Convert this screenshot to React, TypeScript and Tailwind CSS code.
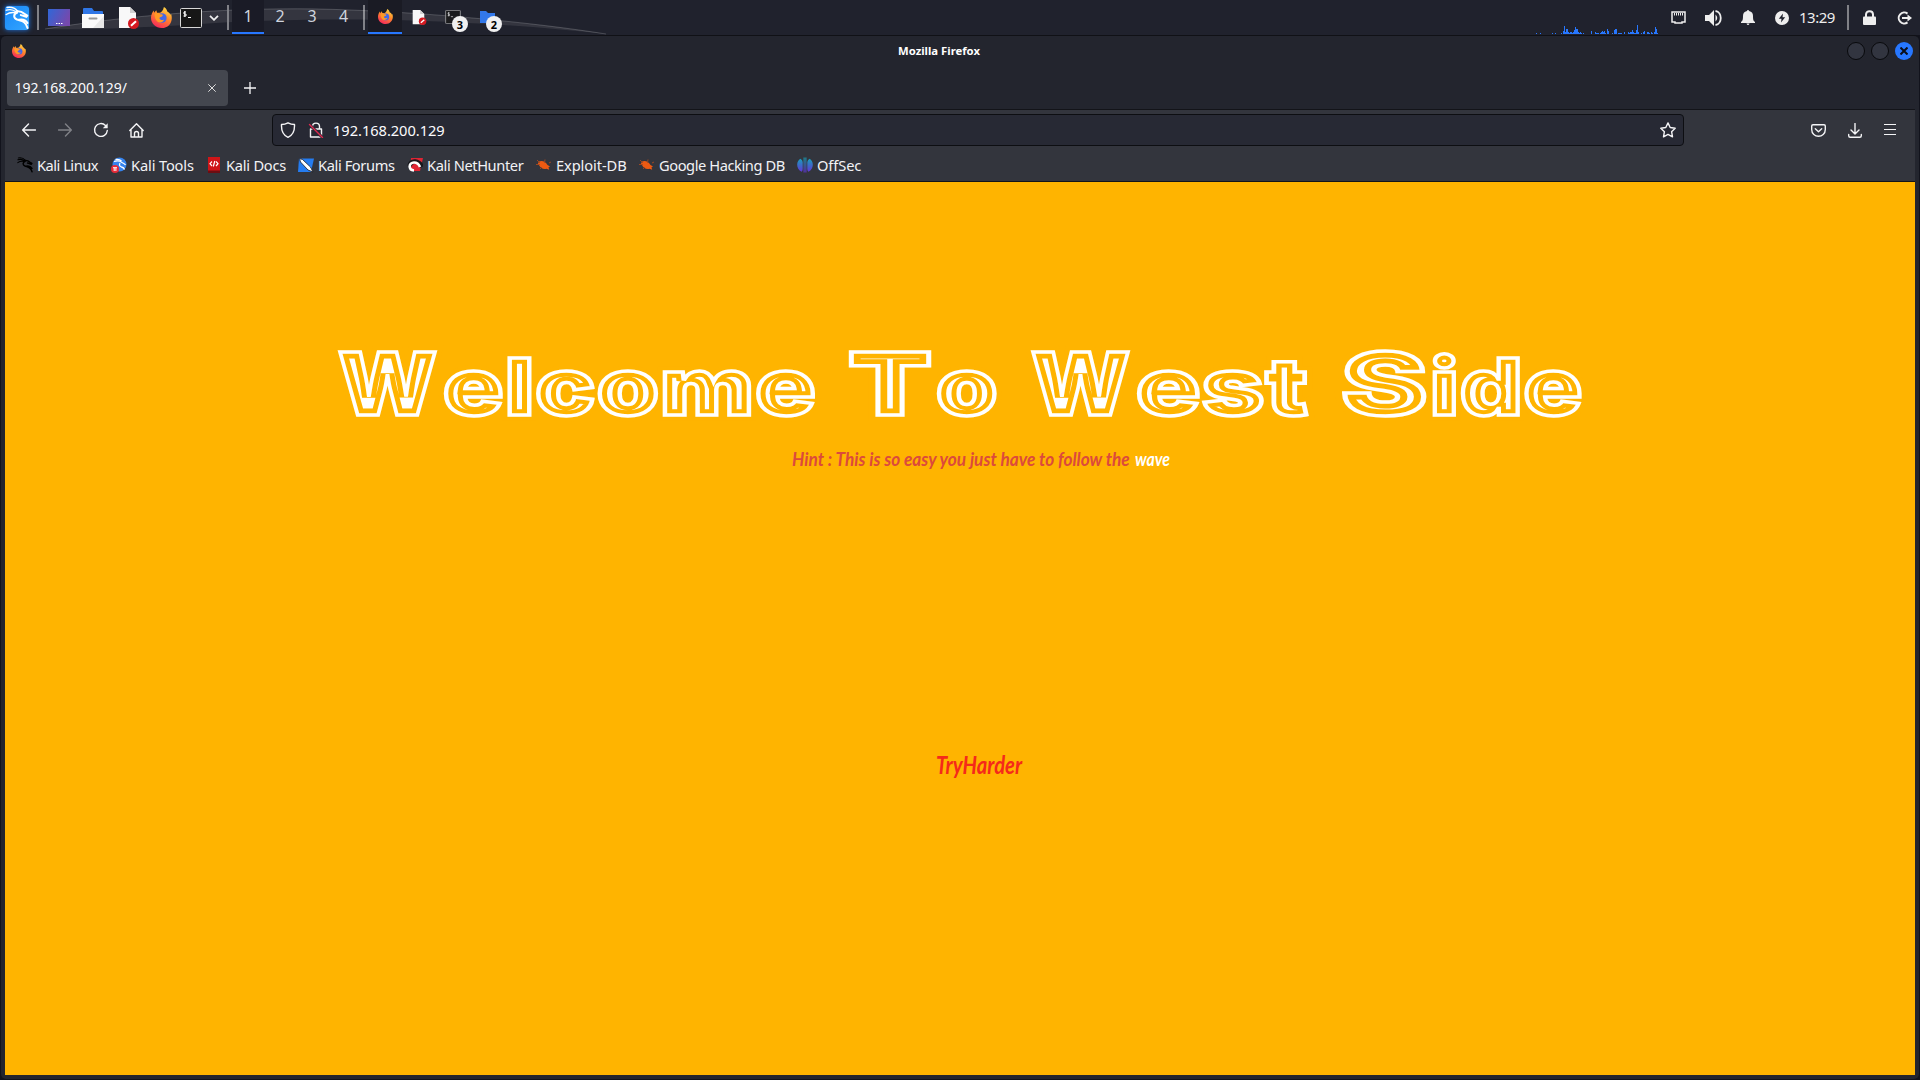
import { useLayoutEffect, useRef, type ReactNode } from "react";

type P = { className?: string };

/** Stretches its single line of text horizontally until it fills the box. */
function Fit({ box, text, className = "" }: { box: string; text: ReactNode; className?: string }) {
  const outer = useRef<HTMLSpanElement>(null);
  const inner = useRef<HTMLSpanElement>(null);
  useLayoutEffect(() => {
    const fit = () => {
      if (outer.current && inner.current) {
        inner.current.style.transform = `scaleX(${outer.current.offsetWidth / inner.current.offsetWidth})`;
      }
    };
    fit();
    document.fonts.ready.then(fit);
  }, []);
  return (
    <span ref={outer} className={`block shrink-0 ${box}`}>
      <span ref={inner} className={`inline-block origin-left whitespace-nowrap ${className}`}>{text}</span>
    </span>
  );
}

/** Text with a thin core line inside a white contour. */
function Inline({ box, text, className }: { box: string; text: string; className: string }) {
  return (
    <Fit
      box={box}
      text={
        <span
          data-text={text}
          className={`relative inline-block leading-[88px] font-black text-white after:absolute after:inset-0 after:text-transparent after:content-[attr(data-text)] after:[-webkit-text-stroke:3.5px_#fff] ${className}`}
        >
          {text}
        </span>
      }
    />
  );
}

const cap = "text-[86px] [-webkit-text-stroke:13px_#ffb400]";
const low = "text-[79px] [-webkit-text-stroke:11.5px_#ffb400] tracking-[1px] mr-[-1px]";

function Word({ initial, rest, first, second }: { initial: string; rest: string; first: string; second: string }) {
  return (
    <span className="flex shrink-0 items-baseline">
      <Inline box={first} text={initial} className={cap} />
      <Inline box={second} text={rest} className={low} />
    </span>
  );
}

function Firefox({ className }: P) {
  return (
    <svg viewBox="0 0 20 20" className={className}>
      <defs>
        <linearGradient id="fx" x1=".8" y1="0" x2=".3" y2="1">
          <stop offset="0" stopColor="#ffe14a" />
          <stop offset=".45" stopColor="#ff8a2a" />
          <stop offset="1" stopColor="#f5265c" />
        </linearGradient>
      </defs>
      <path d="M12.3 0c2.2 1.300 3 3 3.200 4.200 1.700.7 2.500 1.800 2.900 3 .6 0 .8-.5.800-.5 2.200 7-2 13.300-9 13.300C4.500 20 0 16 0 10.300 0 7.500 1.200 5 2.600 3.300l.4 2.200L5 3l.8 2.400 2.700.1C9.500 5.300 11.600 3.600 12.300 0z" fill="url(#fx)" />
      <circle cx="10.300" cy="10.500" r="4.600" fill="#4468e8" />
      <path d="M3.500 6.500c2-1.300 4-.9 5.200.4 1.500 0 2.800.3 2.500 1.100-.7 1.500-2.700 1.200-3.200 2.500.5 2.300 3.200 2.200 4.500 1.300-1 3.300-5.500 4-7.500.800-1.300-1.900-1.700-3.800-1.500-6.100z" fill="#ff9a24" />
    </svg>
  );
}

function Dragon({ className, width = 1.6 }: P & { width?: number }) {
  return (
    <svg viewBox="0 0 24 24" className={className} fill="none" stroke="currentColor" strokeWidth={width} strokeLinecap="round" strokeLinejoin="round">
      <path d="M2 1.500C6 .8 10 2 12.500 5M1.300 4.200C5 3 9 4 11.500 6.200M1.200 8.500C4 6.500 8 6 12 7" strokeWidth={width * 0.7} />
      <path d="M11.500 5.300c3.500-.3 6 .7 7.500 2.200l3.300 2.200-1 1.200-3-1.200-2.500-.6" />
      <path d="M12 6.500c-4 2-3.500 5.500 0 7 4 1.500 8.500 1 10.500 8.500M14 13.800c4.500-.8 7 .7 8.500 3.200" />
    </svg>
  );
}

function Doc({ className }: P) {
  return (
    <svg viewBox="0 0 22 22" className={className}>
      <path d="M1 0h11l6 6v15H1z" fill="#f8f8f8" />
      <path d="M12 0v6h6z" fill="#cfcfcf" />
      <circle cx="15.500" cy="16.500" r="5.500" fill="#d41820" />
      <path d="M13 18.800l5-4.600" stroke="#fff" strokeWidth="2" />
    </svg>
  );
}

function Terminal({ className }: P) {
  return (
    <svg viewBox="0 0 22 20" className={className}>
      <rect x=".5" y=".5" width="21" height="19" rx="1" fill="#171717" stroke="#d8d8d8" />
      <path d="M6 4H4v2h2v2H3.500M4.800 3v6M8 9.500h3" stroke="#fff" fill="none" />
    </svg>
  );
}

function Sep({ className }: P) {
  return <i className={`block h-[25px] w-[2px] shrink-0 bg-[#808187] ${className}`} />;
}

const bars: [number, number][] = [
  [0, 1], [4, 1], [16, 1], [19, 1], [25, 1], [27, 3], [28, 8], [29, 2], [30, 5], [31, 5], [32, 2], [33, 1], [34, 2], [35, 2], [36, 1], [37, 2], [38, 4], [39, 7], [40, 5], [41, 5], [42, 2], [43, 1], [44, 2], [45, 1], [47, 1],
  [55, 3], [59, 2], [60, 1], [61, 1], [62, 1], [64, 1], [65, 2], [66, 3], [67, 2], [68, 3], [69, 1], [71, 5], [72, 3], [76, 1], [78, 4], [79, 5], [80, 5], [82, 1], [83, 1], [84, 1], [85, 1], [88, 2], [92, 2], [93, 1], [94, 2], [95, 2], [96, 4], [97, 2], [98, 1], [99, 1], [100, 4], [101, 9], [102, 2], [105, 1], [107, 2], [108, 3], [111, 2], [112, 2], [113, 1], [115, 2], [116, 1], [118, 2], [119, 7], [120, 5], [121, 1],
];

function Badge({ n }: { n: string }) {
  return (
    <span className="absolute top-[16px] left-[16px] flex size-4 items-center justify-center rounded-full bg-[#f0f0f0] text-[11px] leading-none font-bold text-black">{n}</span>
  );
}

function Panel() {
  return (
    <header className="relative flex h-[35px] w-full shrink-0 items-center bg-[#20222d] text-[#eee]">
      <svg className="absolute top-0 left-0 h-[35px] w-[620px]" viewBox="0 0 620 35">
        <path d="M45 29C150 12 260 6 350 10C430 13 530 22 606 34C480 20 330 15 200 24C140 28 80 30 45 29z" fill="#fff" opacity=".09" />
        <path d="M45 29C150 12 260 6 350 10C430 13 530 22 606 34" fill="none" stroke="#fff" opacity=".18" />
      </svg>
      <div className="relative flex h-[35px] items-center">
        <span className="ml-[5px] flex size-6 items-center justify-center rounded-[3px] bg-linear-to-br from-[#1686f8] to-[#35a6ff] shadow-[0_0_5px_#1d74e0]">
          <Dragon className="size-6 text-white" width={2} />
        </span>
        <Sep className="ml-2" />
        <svg viewBox="0 0 22 17" className="ml-[9px] h-[17px] w-[22px]">
          <defs>
            <linearGradient id="desk" y2=".4"><stop stopColor="#2f67d8" /><stop offset="1" stopColor="#7549ad" /></linearGradient>
          </defs>
          <path d="M0 0h22v17H0z" fill="url(#desk)" />
          <path d="M8 14.500h1.500m1 0h1.500m1 0h1.500" stroke="#fff" />
        </svg>
        <svg viewBox="0 0 22 20" className="ml-3 h-5 w-[22px]">
          <path d="M1 8V1q0-1 1-1h8l2 3h8q1 0 1 1v4z" fill="#2f76e6" />
          <path d="M0 6h22v14H0z" fill="#fafafa" />
          <path d="M22 8v12H11z" fill="#e8e8e8" />
          <path d="M7.500 10.500h7" stroke="#999" strokeWidth="2" strokeLinecap="round" />
        </svg>
        <Doc className="ml-[14px] size-[22px]" />
        <Firefox className="ml-[11px] size-[21px]" />
        <Terminal className="ml-[8px] h-5 w-[22px]" />
        <svg viewBox="0 0 10 6" className="ml-[7px] h-1.5 w-2.5" fill="none" stroke="#eee" strokeWidth="1.800"><path d="M1 .8l4 4 4-4" /></svg>
        <Sep className="ml-[8px]" />
      </div>
      <nav className="relative ml-[3px] flex h-[34px] self-start text-[16px] text-[#cfd4de]">
        <span className="flex w-8 items-center justify-center border-b-2 border-[#2777ff] bg-[#1a1b26]">1</span>
        <span className="flex w-8 items-center justify-center border-b-2 border-transparent">2</span>
        <span className="flex w-8 items-center justify-center border-b-2 border-transparent">3</span>
        <span className="flex w-[31px] items-center justify-center border-b-2 border-transparent">4</span>
      </nav>
      <Sep className="ml-[4px]" />
      <div className="relative ml-[3px] flex h-[34px] self-start">
        <span className="flex w-[34px] items-center justify-center border-b-2 border-[#2777ff] bg-[#1a1b24]"><Firefox className="size-[15px]" /></span>
        <span className="flex w-[34px] items-center justify-center"><Doc className="size-[15px]" /></span>
        <span className="relative flex w-[34px] items-center justify-center"><Terminal className="h-[14px] w-[16px] opacity-80" /><Badge n="3" /></span>
        <span className="relative flex w-[34px] items-center justify-center">
          <svg viewBox="0 0 15 12" className="h-3 w-[15px]"><path d="M0 0h6l2 2h7v10H0z" fill="#3278ea" /></svg>
          <Badge n="2" />
        </span>
      </div>
      <svg viewBox="0 0 123 10" className="mt-auto mb-[1px] ml-auto h-2.5 w-[123px]" fill="#2777ff" shapeRendering="crispEdges">
        {bars.map(([x, h]) => <rect key={x} x={x} y={10 - h} width="1" height={h} />)}
      </svg>
      <svg viewBox="0 0 15 13" className="ml-3 h-[13px] w-[15px]"><path d="M1 1h13v10h-3v1H4v-1H1z" fill="none" stroke="#eee" strokeWidth="1.500" /><path d="M3.500 2v2.500m2-2.500v2.500m2-2.500v2.500m2-2.500v2.500m2-2.500v2.500" stroke="#eee" /></svg>
      <svg viewBox="0 0 17 16" className="ml-[19px] h-4 w-[17px]"><path d="M0 5h4l5-5v16l-5-5H0z" fill="#eee" /><path d="M10.500 4.500q3.500 3.500 0 7" fill="#eee" /><path d="M10.500 1c7 1 7 13 0 14" fill="none" stroke="#eee" strokeWidth="1.800" /></svg>
      <svg viewBox="0 0 14 15" className="ml-[19px] h-[15px] w-[14px]" fill="#eee"><path d="M7 0q1 0 1 1c3 .6 4 2.500 4 5 0 4 .6 5 2 6v1H0v-1c1.400-1 2-2 2-6 0-2.500 1-4.400 4-5q0-1 1-1zM5.500 13.500h3q-.5 1.500-1.500 1.500t-1.500-1.500z" /></svg>
      <svg viewBox="0 0 14 14" className="ml-5 size-3.5"><circle cx="7" cy="7" r="7" fill="#eee" /><path d="M8 2.500L3.800 7.700h2.700L6 11.500l4.200-5.200H7.500z" fill="#20222d" /></svg>
      <time className="ml-[10px] w-9 text-[15px] tracking-[-0.5px] whitespace-nowrap">13:29</time>
      <Sep className="ml-3" />
      <svg viewBox="0 0 13 15" className="ml-[14px] h-[15px] w-[13px]"><path d="M3 7V4.500C3 .2 10 .2 10 4.500V7" fill="none" stroke="#eee" strokeWidth="2" /><rect y="6.500" width="13" height="8.500" rx="1" fill="#eee" /></svg>
      <svg viewBox="0 0 15 14" className="mr-[8px] ml-[21px] h-3.5 w-[15px]" fill="none" stroke="#eee" strokeWidth="2"><path d="M10.500 2.600A5.500 5.500 0 1 0 10.500 11.400M5 7h7" /><path d="M10.500 3.500L15 7l-4.500 3.500z" fill="#eee" stroke="none" /></svg>
    </header>
  );
}

const line = { fill: "none", stroke: "#f4f4f6", strokeWidth: 1.4, strokeLinecap: "round", strokeLinejoin: "round" } as const;

function Toolbar() {
  return (
    <div className="flex h-[40px] items-center">
      <svg viewBox="0 0 14 14" className="ml-[17px] size-3.5" {...line}><path d="M13.500 7H.8M6.500 1L.7 7l5.800 6" /></svg>
      <svg viewBox="0 0 14 14" className="ml-[22px] size-3.5 opacity-40" {...line}><path d="M.5 7h12.700M7.500 1l5.800 6-5.800 6" /></svg>
      <svg viewBox="0 0 14 14" className="ml-[22px] size-3.5 overflow-visible" {...line}><path d="M13.300 7.500A6.400 6.400 0 1 1 11.500 2.500" /><path d="M13.700.2v5H8.800z" fill="#f4f4f6" stroke="none" /></svg>
      <svg viewBox="0 0 15 15" className="ml-[21px] size-[15px]" {...line}><path d="M.8 7.500L7.500.8l6.700 6.700M2 6.500V14h11V6.500M5.500 14v-3.500q0-2 2-2t2 2V14" /></svg>
      <div className="ml-[128px] flex h-8 w-[1412px] items-center rounded-[4px] border border-[#0d0e12] bg-[#272934]">
        <svg viewBox="0 0 16 16" className="ml-[7px] size-4" {...line}><path d="M8 .8q3 1.500 6.500 1.700c.3 6-1.700 10.700-6.500 12.800C3.200 13.200 1.200 8.500 1.500 2.500Q5 2.300 8 .8z" /></svg>
        <svg viewBox="0 0 16 16" className="ml-3 size-4" {...line}><path d="M2.500 7h11v8h-11zM4.500 7V4.500c0-4.500 7-4.500 7 0V7" /><path d="M1.500 2.500l13 13" stroke="#272934" strokeWidth="3" /><path d="M1.500 2.500l13 13" stroke="#e22850" /></svg>
        <span className="ml-[9px] text-[14.667px] tracking-[-0.05px] text-[#fbfbfe]">192.168.200.129</span>
        <svg viewBox="0 0 16 16" className="mr-[7px] ml-auto size-4" {...line}><path d="M8 .9l2.200 4.600 5 .7-3.600 3.500.9 5.100L8 12.400l-4.500 2.400.9-5.100L.8 6.200l5-.7z" /></svg>
      </div>
      <svg viewBox="0 0 15 13" className="ml-[127px] h-[13px] w-[15px]" {...line}><path d="M2 .7h11q1.300 0 1.300 1.300v3.500c0 9-13.600 9-13.600 0V2Q.7.700 2 .700zM4.300 4.800l3.200 3 3.200-3" /></svg>
      <svg viewBox="0 0 14 15" className="ml-[22px] h-[15px] w-[14px]" {...line}><path d="M7 .5v10M3 7l4 4 4-4M.7 11.500v1.300q0 1.500 1.500 1.500h9.600q1.500 0 1.500-1.500v-1.300" /></svg>
      <svg viewBox="0 0 13 11" className="mb-px ml-[22px] h-[11px] w-[13px]" fill="#f4f4f6" shapeRendering="crispEdges"><path d="M0 0h12v1H0zM0 5h12v1H0zM0 10h12v1H0z" /></svg>
    </div>
  );
}

const bug = (
  <svg viewBox="0 0 16 16" className="size-4">
    <path d="M3 4.500c3-1.500 6.500 0 8.500 3.500l2.500 1.500-1.500.7.700 2.600-2.700-1c-3.500.7-6-.8-7.500-3.800L1.800 7z" fill="#ee5a12" />
    <path d="M1 3l3 3M0 7.500h4M4 12l2-2M9 2.500l-.5 3.500M13 6l2-1" stroke="#a84a20" strokeWidth=".9" />
  </svg>
);

const bookmarks: { label: string; width: string; icon: ReactNode }[] = [
  { label: "Kali Linux", width: "w-[94px] tracking-[-0.5px]", icon: <Dragon className="size-4 text-black" width={2.2} /> },
  {
    label: "Kali Tools", width: "w-[95px] tracking-[-0.15px]",
    icon: <svg viewBox="0 0 16 16" className="size-4"><circle cx="8.500" cy="7.500" r="7" fill="#3583ed" /><path d="M3 4.500q5-1.500 8 1c2 1 3 1.500 3.500 2.500M9 6q-1.500 3 1.500 4 2.500.5 3 2.500M4.500 2.500q4-.5 6 1.500" fill="none" stroke="#fff" strokeWidth="1.300" /><circle cx="4" cy="12" r="4" fill="#e62b38" /><path d="M2 10.700h4M3.200 11v3m1.700-3v3" stroke="#fff" /></svg>,
  },
  {
    label: "Kali Docs", width: "w-[92px] tracking-[-0.25px]",
    icon: <svg viewBox="0 0 16 16" className="size-4"><path d="M2 0h12v16H2z" fill="#cf1518" /><path d="M2 13.500h12V16H2z" fill="#6d0d12" /><path d="M6 4.500L4 6.700 6 9m4-4.500l2 2.200L10 9M8.800 4L7.300 9.500" fill="none" stroke="#fff" strokeWidth="1.200" /></svg>,
  },
  {
    label: "Kali Forums", width: "w-[109px] tracking-[-0.4px]",
    icon: <svg viewBox="0 0 16 16" className="size-4"><path d="M1 1.500h15L13 15H0z" fill="#257cf0" /><path d="M1.500 1.500l3 1 8 7.500 2.500 5-5-2L2.500 5z" fill="#fff" stroke="#1a1b22" strokeWidth=".8" /></svg>,
  },
  {
    label: "Kali NetHunter", width: "w-[129px] tracking-[-0.4px]",
    icon: <svg viewBox="0 0 16 16" className="size-4"><path d="M4 1h12l-3 13H3z" fill="#df2534" /><path d="M2.500 9C4 2.500 12 3 15 10" fill="none" stroke="#16171c" strokeWidth="4.500" /><path d="M7 13.500C1 13 1.500 5.500 7 5.500c3.500 0 5 2 6 4.500" fill="none" stroke="#fff" strokeWidth="2.600" /></svg>,
  },
  { label: "Exploit-DB", width: "w-[103px] tracking-[-0.1px]", icon: bug },
  { label: "Google Hacking DB", width: "w-[158px] tracking-[-0.43px]", icon: bug },
  {
    label: "OffSec", width: "w-[80px] tracking-[-0.1px]",
    icon: (
      <svg viewBox="0 0 16 16" className="size-4">
        <defs><linearGradient id="off" x2="0" y2="1"><stop stopColor="#12a8b8" /><stop offset="1" stopColor="#6530d8" /></linearGradient></defs>
        <path d="M3.500 1.800Q5.500 3 5.700 5v7q0 1.500-1 2.700C-1.200 12-1 4 3.500 1.800zM6.600.5h1v15h-1zM8.400.5h1v15h-1zM12.500 1.800c4.500 2.200 4.700 10.200-1.200 12.900q-1-1.200-1-2.700V5q.2-2 2.200-3.200z" fill="url(#off)" />
      </svg>
    ),
  },
];

export default function App() {
  return (
    <div className="flex h-[1080px] w-[1920px] flex-col overflow-hidden bg-[#12131c] font-['Noto_Sans',sans-serif]">
      <Panel />
      <section className="mx-px flex h-[1044px] shrink-0 flex-col rounded-[5px] border-t border-[#101116] bg-[#23252e]">
        <div className="flex h-[30px] shrink-0 items-center pl-[11px]">
          <Firefox className="size-[14px] shrink-0" />
          <h1 className="w-[1821px] shrink-0 pl-[5px] text-center text-[11.3px] font-bold text-white">Mozilla Firefox</h1>
          <div className="flex shrink-0 gap-1.5">
            <i className="size-[18px] rounded-full border border-[#08090c] bg-[#323540]" />
            <i className="size-[18px] rounded-full border border-[#08090c] bg-[#323540]" />
            <i className="flex size-[18px] items-center justify-center rounded-full bg-[#2777ff]">
              <svg viewBox="0 0 8 8" className="size-2" stroke="#0a0d18" strokeWidth="2"><path d="M.5.5l7 7m0-7l-7 7" /></svg>
            </i>
          </div>
        </div>
        <div className="flex h-[43px] shrink-0 items-center pl-1.5">
          <div className="flex h-9 w-[221px] items-center justify-between rounded-[4px] bg-[#44474f] pr-3 pl-[7.500px] text-[14px] text-[#fbfbfe]">
            <span>192.168.200.129/</span>
            <svg viewBox="0 0 8 8" className="size-2" stroke="#ddd"><path d="M.3.3l7.400 7.400m0-7.400L.3 7.700" /></svg>
          </div>
          <svg viewBox="0 0 12 12" className="ml-4 size-3" stroke="#f4f4f6" strokeWidth="1.300"><path d="M6 0v12M0 6h12" /></svg>
        </div>
        <div className="mx-1 h-[73px] shrink-0 border-y border-[#131419] bg-[#33353d]">
          <Toolbar />
          <div className="flex h-[29px] items-center pl-3 text-[14.667px] leading-5 text-[#f2f2f5]">
            {bookmarks.map((b) => (
              <span key={b.label} className={`flex shrink-0 items-center gap-1 whitespace-nowrap ${b.width}`}>
                {b.icon}
                {b.label}
              </span>
            ))}
          </div>
        </div>
        <main className="mx-1 h-[893px] shrink-0 bg-[#ffb400]">
          <h2 className="flex h-[246px] pt-[158px] pl-[333px] font-['Inter',sans-serif]">
            <Word initial="W" rest="elcome" first="w-[99px]" second="ml-[6px] w-[373px]" />
            <span className="w-[32px]"> </span>
            <Word initial="T" rest="o" first="w-[84px]" second="ml-[4px] w-[61px]" />
            <span className="w-[34px]"> </span>
            <Word initial="W" rest="est" first="w-[99px]" second="ml-[6px] w-[172px]" />
            <span className="w-[33px]"> </span>
            <Word initial="S" rest="ide" first="w-[86px]" second="ml-[3px] w-[152px]" />
          </h2>
          <p className="mt-[19px] flex pl-[787px] font-['Lato',sans-serif] text-[19px] leading-6 font-bold text-[#dc4a3c] italic">
            <Fit box="w-[338px]" text="Hint : This is so easy you just have to follow the" />
            <Fit box="ml-[5px] w-[35px]" className="text-white" text="wave" />
          </p>
          <p className="mt-[278px] flex pl-[931px] font-['Lato',sans-serif] text-[24px] leading-8 font-bold text-[#f52a1a] italic">
            <Fit box="w-[86px]" text="TryHarder" />
          </p>
        </main>
      </section>
    </div>
  );
}
